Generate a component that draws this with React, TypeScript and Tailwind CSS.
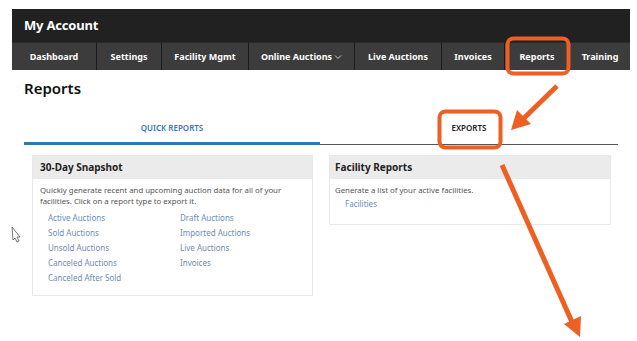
const navItems = [
  { label: "Dashboard", w: "w-[85px]" },
  { label: "Settings", w: "w-[65px]" },
  { label: "Facility Mgmt", w: "w-[87px]" },
  { label: "Online Auctions", w: "w-[106px]", caret: true },
  { label: "Live Auctions", w: "w-[87px]" },
  { label: "Invoices", w: "w-[63px]" },
  { label: "Reports", w: "w-[65px]" },
  { label: "Training", w: "w-[60px]" },
];

const leftLinks = ["Active Auctions", "Sold Auctions", "Unsold Auctions", "Canceled Auctions", "Canceled After Sold"];
const rightLinks = ["Draft Auctions", "Imported Auctions", "Live Auctions", "Invoices"];

function Annotations() {
  return (
    <svg className="absolute inset-0 pointer-events-none" width="637" height="341" viewBox="0 0 637 341">
      {/* highlight boxes */}
      <rect x="507.5" y="38.5" width="61" height="35" rx="6" fill="none" stroke="#ee5f24" strokeWidth="4" />
      <rect x="439.5" y="111.5" width="61" height="36" rx="6" fill="none" stroke="#ee5f24" strokeWidth="4" />
      {/* arrow to exports tab */}
      <line x1="557" y1="86" x2="522" y2="120" stroke="#ee5f24" strokeWidth="5" />
      <polygon points="511,130 517,110 531,124" fill="#ee5f24" />
      {/* long arrow */}
      <line x1="502" y1="165" x2="572" y2="322" stroke="#ee5f24" strokeWidth="5" />
      <polygon points="580,337 564,324 581,316" fill="#ee5f24" />
      {/* cursor */}
      <path d="M12 227 L20 237 L17 237 L19 241 L17 242 L15 238 L13 240 Z" fill="#fff" stroke="#555" strokeWidth="0.8" />
    </svg>
  );
}

export default function App() {
  return (
    <div className="relative w-[637px] h-[341px] bg-white overflow-hidden font-['Noto_Sans',sans-serif]">

      <div className="pt-[9px] pl-[12px] pr-[7px]">
        <div className="h-[33px] bg-[#212121] flex items-center pl-[12px] text-white font-bold text-[13px] tracking-[-0.2px]">
          My Account
        </div>
        <div className="flex h-[28px] bg-[#3c3c3c] border-t border-[#2a2a2a]">
          {navItems.map((n, i) => (
            <div
              key={n.label}
              className={`${n.w} flex items-center justify-center text-[9px] font-bold text-white ${i < navItems.length - 1 ? "border-r border-[#1c1c1c]" : ""}`}
            >
              {n.label}
              {n.caret && (
                <svg width="8" height="6" viewBox="0 0 8 6" className="ml-[2px] mt-[1px]">
                  <path d="M1 1.5 L4 4.5 L7 1.5" fill="none" stroke="#ddd" strokeWidth="0.9" />
                </svg>
              )}
            </div>
          ))}
        </div>
      </div>

      <div className="pl-[24px] pr-[19px]">
        <h1 className="mt-[8px] h-[20px] text-[15px] font-semibold text-[#111] leading-[20px]">Reports</h1>

        <div className="mt-[24px] flex">
          <div className="w-[296px] h-[23px] flex items-start justify-center text-[8px] font-semibold text-[#3a78b5] border-b-[3px] border-[#2f78b5]">
            QUICK REPORTS
          </div>
          <div className="flex-1 h-[23px] flex items-start justify-center text-[8px] font-semibold text-[#222] border-b border-[#555]">
            EXPORTS
          </div>
        </div>

        <div className="mt-[10px] ml-[8px] flex gap-[16px] items-start">
          <div className="w-[281px] h-[141px] border border-[#e8e8e8]">
            <div className="h-[23px] bg-[#ebebeb] flex items-center pl-[7px] text-[10px] font-bold text-[#222]">
              30-Day Snapshot
            </div>
            <div className="pl-[7px] pt-[6px] text-[7.8px] leading-[11px] text-[#555]">
              <p>Quickly generate recent and upcoming auction data for all of your</p>
              <p>facilities. Click on a report type to export it.</p>
              <div className="flex mt-[3px] pl-[8px] text-[8px] text-[#6d8db8]">
                <div className="w-[132px] flex flex-col">
                  {leftLinks.map((l) => (
                    <span key={l} className="h-[15px] leading-[15px]">{l}</span>
                  ))}
                </div>
                <div className="flex flex-col">
                  {rightLinks.map((l) => (
                    <span key={l} className="h-[15px] leading-[15px]">{l}</span>
                  ))}
                </div>
              </div>
            </div>
          </div>

          <div className="w-[282px] h-[70px] border border-[#e8e8e8]">
            <div className="h-[23px] bg-[#ebebeb] flex items-center pl-[5px] text-[10px] font-bold text-[#222]">
              Facility Reports
            </div>
            <div className="pl-[5px] pt-[6px] text-[7.8px] leading-[11px] text-[#555]">
              <p>Generate a list of your active facilities.</p>
              <p className="pl-[10px] mt-[2px] text-[8px] text-[#6d8db8]">Facilities</p>
            </div>
          </div>
        </div>
      </div>

      <Annotations />
    </div>
  );
}
